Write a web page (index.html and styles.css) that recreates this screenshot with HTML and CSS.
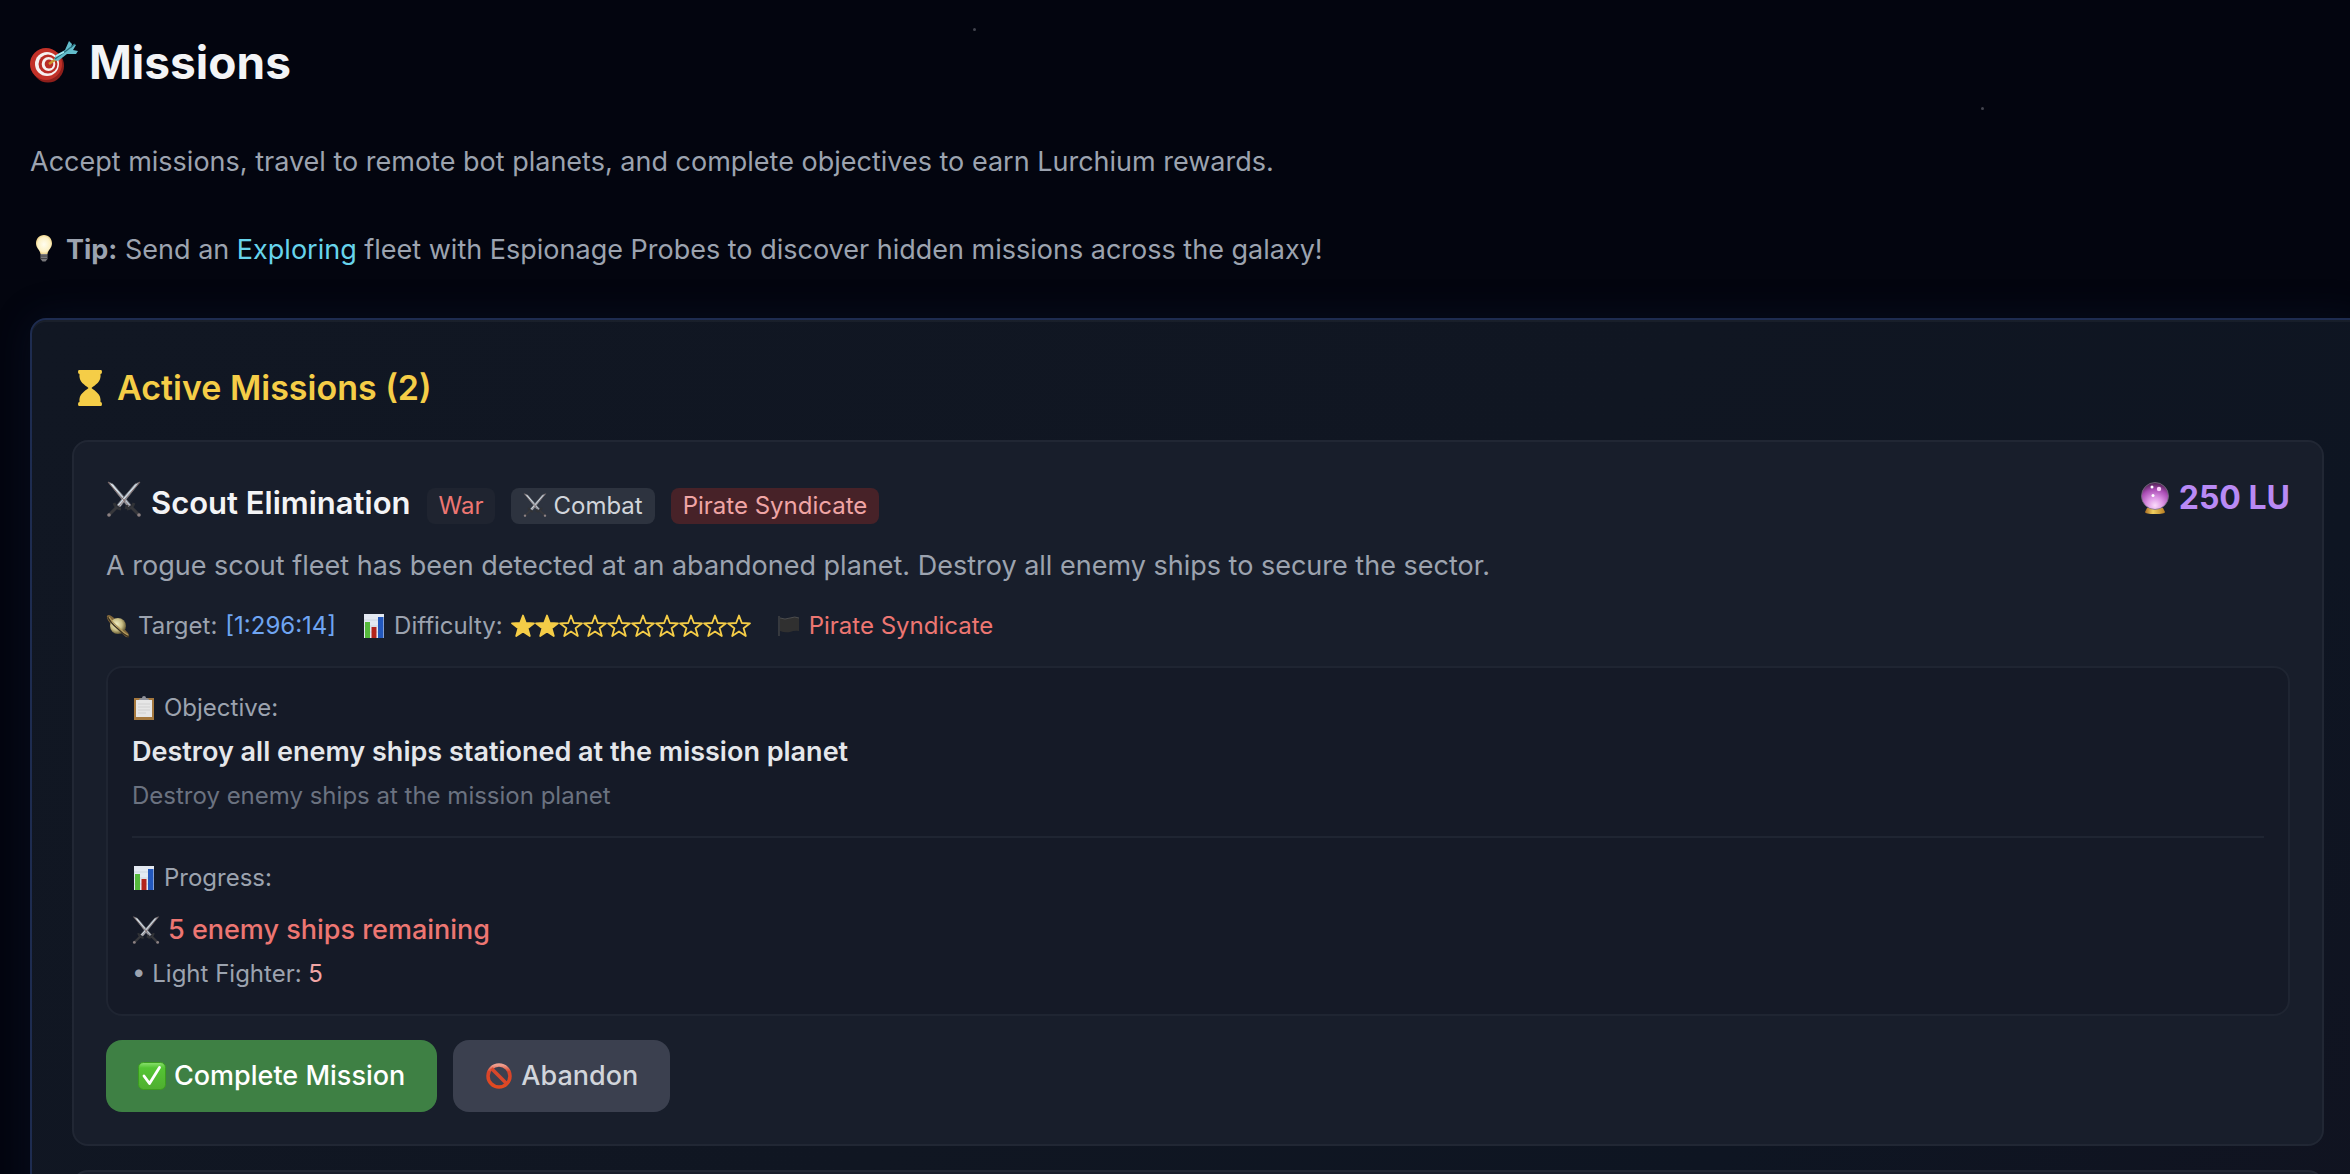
FILE: index.html
```html
<!DOCTYPE html>
<html lang="en">
<head>
    <meta charset="UTF-8">
    <meta name="viewport" content="width=device-width, initial-scale=1.0">
    <title>Missions</title>
    <link rel="stylesheet" href="styles.css">
</head>
<body>
    <svg class="defs" aria-hidden="true">
        <defs>
            <linearGradient id="blade" x1="0" y1="0" x2="1" y2="1">
                <stop offset="0" stop-color="#e4f3fb"/>
                <stop offset="1" stop-color="#a9b6c2"/>
            </linearGradient>
            <linearGradient id="green" x1="0" y1="0" x2="0" y2="1">
                <stop offset="0" stop-color="#8be070"/>
                <stop offset="0.2" stop-color="#54c534"/>
                <stop offset="1" stop-color="#4fae30"/>
            </linearGradient>
            <linearGradient id="ban" x1="0" y1="0" x2="0" y2="1">
                <stop offset="0" stop-color="#f0a090"/>
                <stop offset="0.3" stop-color="#d8432a"/>
                <stop offset="1" stop-color="#e04a20"/>
            </linearGradient>
            <radialGradient id="orb" cx="0.5" cy="0.85" r="0.85">
                <stop offset="0" stop-color="#fbdcfb"/>
                <stop offset="0.35" stop-color="#dc94e4"/>
                <stop offset="0.7" stop-color="#a94cb4"/>
                <stop offset="1" stop-color="#4a1f4c"/>
            </radialGradient>
            <linearGradient id="gold" x1="0" y1="0" x2="1" y2="0">
                <stop offset="0" stop-color="#a86a20"/>
                <stop offset="0.4" stop-color="#f0d060"/>
                <stop offset="1" stop-color="#b87c20"/>
            </linearGradient>
            <radialGradient id="bulb" cx="0.5" cy="0.5" r="0.55">
                <stop offset="0" stop-color="#fffdf0"/>
                <stop offset="0.7" stop-color="#fdf1c4"/>
                <stop offset="1" stop-color="#e8c878"/>
            </radialGradient>
            <radialGradient id="saturn" cx="0.4" cy="0.4" r="0.6">
                <stop offset="0" stop-color="#f0f0c8"/>
                <stop offset="0.6" stop-color="#c8bd84"/>
                <stop offset="1" stop-color="#6e6238"/>
            </radialGradient>
        </defs>
        <symbol id="swords" viewBox="0 0 36 36">
            <path d="M2 1 L7 3 L25 24 L22 26 Z" fill="url(#blade)" stroke="#6d6a6e" stroke-width="0.8"/>
            <path d="M34 1 L29 3 L11 24 L14 26 Z" fill="url(#blade)" stroke="#6d6a6e" stroke-width="0.8"/>
            <path d="M2 1 L23 25 M34 1 L13 25" stroke="#7d5f5c" stroke-width="0.8"/>
            <path d="M20 28 L21 24 M21 28 Q26 28 28 22 M15 28 Q10 28 8 22" stroke="#303236" stroke-width="2.8" fill="none"/>
            <path d="M25 26 L33 34 M11 26 L3 34" stroke="#37383c" stroke-width="3"/>
            <circle cx="33" cy="34" r="1.8" fill="#8c8182"/>
            <circle cx="3" cy="34" r="1.8" fill="#8c8182"/>
        </symbol>
        <symbol id="chart" viewBox="-2 0 24 24">
            <path d="M0 0 H20 V24 H0 Z" fill="#e3e9f2"/>
            <path d="M0 6 H20 M0 12 H20 M0 18 H20" stroke="#c9d2de" stroke-width="0.8"/>
            <path d="M1 8 H6 V24 H1 Z" fill="#55b93c"/>
            <path d="M7.500 13 H12.500 V24 H7.500 Z" fill="#b3241c"/>
            <path d="M14 3 H19.500 V24 H14 Z" fill="#2358bd"/>
        </symbol>
        <symbol id="star" viewBox="0 0 24 24">
            <path d="M12 1.500 L14.800 9 L23 9.300 L16.600 14.300 L18.800 22 L12 17.500 L5.200 22 L7.400 14.300 L1 9.300 L9.200 9 Z" stroke="#f5cd47" stroke-width="1.800" stroke-linejoin="round"/>
        </symbol>
    </svg>

    <div class="stars">
        <span class="speck speck-a"></span>
        <span class="speck speck-b"></span>
    </div>

    <main class="page">
        <h1>
            <svg class="icon-target" viewBox="0 0 48 42" aria-hidden="true">
                <ellipse cx="18" cy="25" rx="16" ry="16.500" fill="#8f1f1b"/>
                <ellipse cx="16" cy="23" rx="16" ry="16" fill="#c23128"/>
                <ellipse cx="17" cy="23" rx="12" ry="12" fill="#f6f1f0"/>
                <ellipse cx="18" cy="23" rx="9.500" ry="9.500" fill="#b92c25"/>
                <ellipse cx="18.500" cy="23" rx="6.800" ry="7" fill="#f6f1f0"/>
                <ellipse cx="19" cy="23" rx="4.300" ry="4.500" fill="#b92c25"/>
                <path d="M19 23 L26 18" stroke="#c9962e" stroke-width="2.500"/>
                <path d="M24 19 L26 14 L35 9 L39 0 L42 3 L41 7 L44 3 L46 4 L43 9 L48 10 L46 13 L37 13 L28 20 Z" fill="#62bccb"/>
                <path d="M25 18 L36 10 L45 3" stroke="#256c78" stroke-width="1.200" fill="none"/>
                <path d="M26 15 L34 11" stroke="#a5ecf3" stroke-width="1.500"/>
            </svg>
            Missions
        </h1>
        <p class="intro">Accept missions, travel to remote bot planets, and complete objectives to earn Lurchium rewards.</p>
        <p class="intro"><svg class="icon-bulb" viewBox="0 0 28 28" aria-hidden="true">
                <path d="M14 1 C9 1 6 5 6 9.500 C6 14 10 16 10.500 20 H17.500 C18 16 22 14 22 9.500 C22 5 19 1 14 1 Z" fill="url(#bulb)"/>
                <path d="M10.500 20 H17.500 V25 L15.500 27.500 H12.500 L10.500 25 Z" fill="#77777a"/>
                <path d="M10.500 22 H17.500 M10.500 24.500 H17.500" stroke="#3c3c3e" stroke-width="0.9"/>
            </svg><strong>Tip:</strong> Send an <a class="explore" href="#exploring">Exploring</a> fleet with Espionage Probes to discover hidden missions across the galaxy!</p>

        <section class="panel">
            <h2>
                <svg class="icon-hourglass" viewBox="0 0 24 36" aria-hidden="true">
                    <path d="M1 0 H23 Q24 0 24 2 Q24 4 22.500 4 C23.500 12 17 15 13.500 18 C17 21 23.500 24 22.500 32 Q24 32 24 34 Q24 36 23 36 H1 Q0 36 0 34 Q0 32 1.500 32 C0.500 24 7 21 10.500 18 C7 15 0.500 12 1.500 4 Q0 4 0 2 Q0 0 1 0 Z" fill="#f5cd47"/>
                </svg>
                Active Missions (2)
            </h2>

            <article class="card">
                <div class="card-header">
                    <div class="card-title">
                        <h3><svg class="icon-swords-lg" aria-hidden="true"><use href="#swords"/></svg>Scout Elimination</h3>
                        <span class="tag tag-war">War</span>
                        <span class="tag tag-combat"><svg class="icon-swords-sm" aria-hidden="true"><use href="#swords"/></svg>Combat</span>
                        <span class="tag tag-pirate">Pirate Syndicate</span>
                    </div>
                    <div class="reward">
                        <svg class="icon-orb" viewBox="0 0 28 32" aria-hidden="true">
                            <path d="M6 26 H22 L24 30 Q24 32 14 32 Q4 32 4 30 Z" fill="url(#gold)"/>
                            <circle cx="14" cy="14" r="13.500" fill="url(#orb)" stroke="#76727f" stroke-width="0.8"/>
                            <circle cx="11" cy="5" r="1.500" fill="#fff"/>
                            <circle cx="18" cy="7" r="2.200" fill="#fbd5fb"/>
                            <circle cx="12" cy="13.500" r="1.500" fill="#fff"/>
                        </svg>
                        250 LU
                    </div>
                </div>
                <p class="description">A rogue scout fleet has been detected at an abandoned planet. Destroy all enemy ships to secure the sector.</p>
                <div class="meta">
                    <span class="meta-item">
                        <svg class="icon-planet" viewBox="0 0 24 24" aria-hidden="true">
                            <path d="M1 2 Q3 -1 10 6 L22 19 Q25 24 20 23 L6 11 Q0 5 1 2 Z" fill="#80663a"/>
                            <circle cx="12" cy="12" r="8" fill="url(#saturn)"/>
                            <path d="M2 3 Q4 8 11 14 Q17 20 23 23" stroke="#3c3322" stroke-width="1.500" fill="none"/>
                            <path d="M3 3 Q6 8 12 13 Q18 19 22 21" stroke="#b39a5e" stroke-width="1.200" fill="none"/>
                        </svg>
                        Target: <a class="coords" href="#target">[1:296:14]</a>
                    </span>
                    <span class="meta-item">
                        <svg class="icon-chart" aria-hidden="true"><use href="#chart"/></svg>
                        Difficulty:
                        <span class="rating" role="img" aria-label="2 out of 10">
                            <svg class="star full"><use href="#star"/></svg>
                            <svg class="star full"><use href="#star"/></svg>
                            <svg class="star"><use href="#star"/></svg>
                            <svg class="star"><use href="#star"/></svg>
                            <svg class="star"><use href="#star"/></svg>
                            <svg class="star"><use href="#star"/></svg>
                            <svg class="star"><use href="#star"/></svg>
                            <svg class="star"><use href="#star"/></svg>
                            <svg class="star"><use href="#star"/></svg>
                            <svg class="star"><use href="#star"/></svg>
                        </span>
                    </span>
                    <span class="meta-item faction">
                        <svg class="icon-flag" viewBox="0 0 24 24" aria-hidden="true">
                            <path d="M2 2 V22" stroke="#4b4b4c" stroke-width="1.200"/>
                            <path d="M3 4 Q8 6 13 4 Q18 2 22 4 V17 Q18 16 13 18 Q8 19 3 17 Z" fill="#303030"/>
                            <path d="M3 4 Q8 6 13 4 Q18 2 22 4" stroke="#555" stroke-width="0.8" fill="none"/>
                        </svg>
                        Pirate Syndicate
                    </span>
                </div>

                <div class="details">
                    <div class="label">
                        <svg class="icon-clip" viewBox="-2 0 24 24" aria-hidden="true">
                            <path d="M0 2 H20 V24 H0 Z" fill="#a5783e"/>
                            <path d="M2 4 H18 V21 H2 Z" fill="#e6e6e6"/>
                            <path d="M4 8 H16 M4 11 H16 M4 14 H16 M4 17 H12" stroke="#d0d0d0" stroke-width="1"/>
                            <path d="M5 4 Q5 2 8 2 Q8 0 10 0 Q12 0 12 2 Q15 2 15 4 Z" fill="#8f929c"/>
                        </svg>
                        Objective:
                    </div>
                    <div class="objective">Destroy all enemy ships stationed at the mission planet</div>
                    <div class="hint">Destroy enemy ships at the mission planet</div>
                    <div class="progress">
                        <div class="label">
                            <svg class="icon-chart" aria-hidden="true"><use href="#chart"/></svg>
                            Progress:
                        </div>
                        <div class="remaining">
                            <svg class="icon-swords-md" aria-hidden="true"><use href="#swords"/></svg>
                            5 enemy ships remaining
                        </div>
                        <div class="ship">• Light Fighter: <span class="count">5</span></div>
                    </div>
                </div>

                <div class="actions">
                    <button class="button complete" type="button">
                        <svg class="icon-button" viewBox="0 0 28 28" aria-hidden="true">
                            <rect x="0.500" y="0.500" width="27" height="27" rx="5" fill="url(#green)" stroke="#3b9c20"/>
                            <path d="M6 14 L11.500 21.500 L21.500 5.500" stroke="#fff" stroke-width="2.800" fill="none" stroke-linecap="round" stroke-linejoin="round"/>
                        </svg>
                        Complete Mission
                    </button>
                    <button class="button abandon" type="button">
                        <svg class="icon-button" viewBox="0 0 28 28" aria-hidden="true">
                            <circle cx="14" cy="14" r="11" fill="none" stroke="url(#ban)" stroke-width="3.500"/>
                            <path d="M6.500 6.500 L21.500 21.500" stroke="#d9472b" stroke-width="3.500"/>
                        </svg>
                        Abandon
                    </button>
                </div>
            </article>
            <article class="card"></article>
        </section>
    </main>
</body>
</html>
```

FILE: styles.css
```css
* { box-sizing: border-box; }
html, body { height: 100%; }
body { font-family: Inter, "Liberation Sans", sans-serif; margin: 0; font-size: 27px; line-height: 40px; color: #9ca3af; background-color: #03050f; overflow: hidden; }
h1, h2, h3, p { margin: 0; }
a { text-decoration: none; }
svg { flex: none; }
.defs { position: absolute; width: 0; height: 0; }

.stars { position: absolute; inset: 0; overflow: hidden; pointer-events: none; }
.speck { position: absolute; width: 3px; height: 3px; border-radius: 50%; background-color: #42444e; }
.speck-a { left: 41.4%; top: 28px; }
.speck-b { left: 84.3%; top: 107px; }

.page { position: relative; padding: 30px 0 0 30px; margin-right: -16px; }
h1 { display: flex; align-items: center; gap: 11px; font-size: 46px; line-height: 64px; font-weight: 700; color: #f3f4f6; margin-bottom: 48px; }
.intro { margin-bottom: 48px; }
.intro strong { font-weight: 700; }
.explore { color: #67d4ec; }

.panel { padding: 40px 40px 38px; border: 2px solid #1e2c50; border-radius: 16px; background: linear-gradient(135deg, #111723 0%, #101622 50%, #0e1522 75%, #111320 100%); box-shadow: 0 0 40px rgba(30, 50, 90, 0.2), inset 0 2px 0 rgba(255, 255, 255, 0.04); }
h2 { display: flex; align-items: center; gap: 15px; padding-left: 6px; font-size: 34px; line-height: 56px; font-weight: 600; color: #f5cd47; margin-bottom: 24px; }
.card { padding: 32px; border: 2px solid #212734; border-radius: 16px; background-color: #181e2b; margin-bottom: 24px; min-height: 120px; }
.card-header { display: flex; justify-content: space-between; align-items: flex-start; margin-bottom: 14px; }
.card-title { display: flex; align-items: baseline; gap: 16px; }
h3 { font-size: 31px; line-height: 58px; font-weight: 600; color: #f3f4f6; }
.tag { padding: 0 12px; border-radius: 8px; font-size: 24px; line-height: 36px; }
.tag-war { background-color: #1f2430; color: #ed7672; }
.tag-combat { background-color: #2d333f; color: #d1d5db; }
.tag-pirate { background-color: #472228; color: #f0a5a5; }
.reward { display: flex; align-items: center; gap: 10px; font-size: 32px; line-height: 48px; font-weight: 700; color: #b98af5; }
.description { margin-bottom: 22px; }
.meta { display: flex; gap: 26px; font-size: 24px; line-height: 36px; margin-bottom: 22px; }
.meta-item { display: flex; align-items: center; gap: 8px; }
.coords { color: #6fa5f2; }
.rating { display: flex; }
.star { width: 24px; height: 24px; fill: none; }
.star.full { fill: #f5cd47; }
.faction { color: #ed7672; }

.details { padding: 22px 24px; border: 2px solid #1f2532; border-radius: 16px; background-color: #151a27; margin-bottom: 24px; }
.label { display: flex; align-items: center; gap: 8px; font-size: 24px; line-height: 36px; margin-bottom: 6px; }
.objective { font-weight: 600; color: #e5e7eb; margin-bottom: 6px; }
.hint { font-size: 24px; line-height: 36px; color: #6b7280; }
.progress { margin-top: 22px; padding-top: 22px; border-top: 2px solid #1f2532; }
.remaining { display: flex; align-items: center; gap: 8px; font-weight: 500; color: #ed7672; margin-top: 14px; }
.ship { font-size: 24px; line-height: 36px; margin-top: 6px; }
.count { color: #f0a5a5; }

.actions { display: flex; gap: 16px; }
.button { display: flex; align-items: center; gap: 8px; height: 72px; padding: 0 32px; border: 0; border-radius: 16px; font: 500 27px/40px Inter, "Liberation Sans", sans-serif; cursor: pointer; }
.complete { background-color: #3e8044; color: #fff; }
.abandon { background-color: #3b404f; color: #d1d5db; }

.icon-target { width: 48px; height: 42px; }
.icon-bulb { width: 28px; height: 28px; margin-right: 8px; vertical-align: -3px; }
.icon-hourglass { width: 24px; height: 36px; }
.icon-swords-lg { width: 36px; height: 36px; margin-right: 9px; vertical-align: -3px; }
.icon-swords-md { width: 28px; height: 28px; }
.icon-swords-sm { width: 24px; height: 24px; margin-right: 6px; vertical-align: -3px; }
.icon-orb { width: 28px; height: 32px; }
.icon-planet, .icon-flag { width: 24px; height: 24px; }
.icon-chart, .icon-clip { width: 24px; height: 24px; }
.icon-button { width: 28px; height: 28px; }
```
